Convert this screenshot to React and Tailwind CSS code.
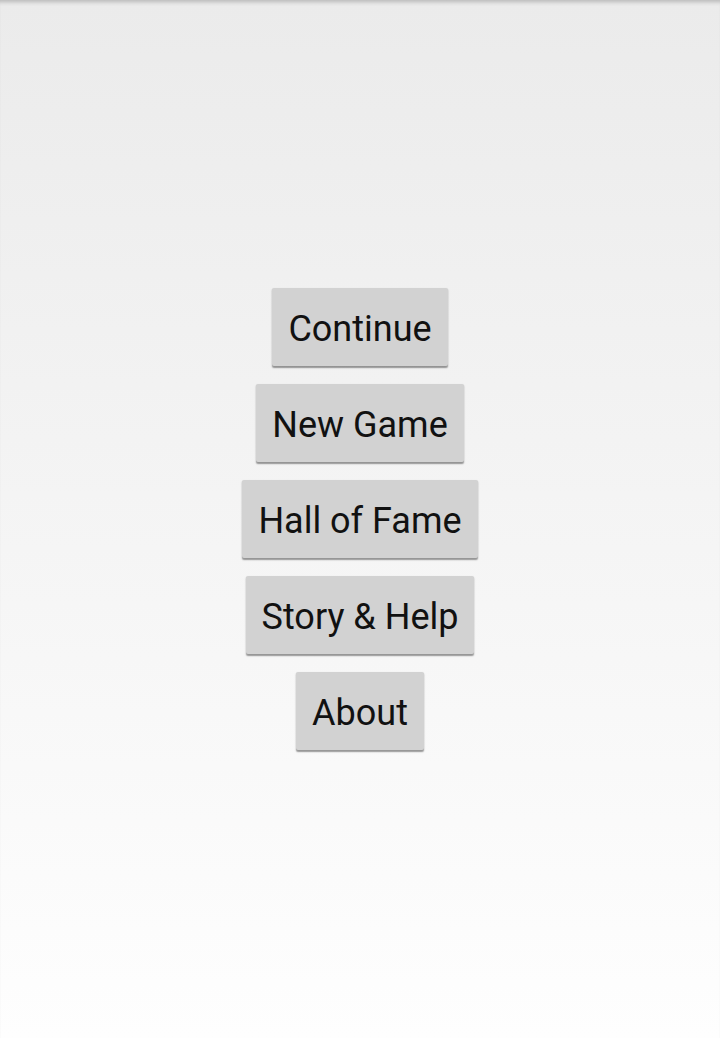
const items = ['Continue', 'New Game', 'Hall of Fame', 'Story & Help', 'About']

const App = () => {
  return (
    <div
      className="h-[1038px] w-full flex flex-col items-center justify-center gap-[18px] bg-gradient-to-b from-[#ebebeb] to-[#fefefe] shadow-[inset_0_5px_4px_-3px_rgba(0,0,0,0.22)]"
      style={{ fontFamily: 'Roboto, "Noto Sans", sans-serif' }}
    >
      {items.map((label) => (
        <button
          key={label}
          className="h-[78px] px-[16px] pt-[4px] bg-[#d2d2d2] rounded-[2px] text-[36px] leading-none text-[#111] shadow-[0_1.5px_1.5px_rgba(0,0,0,0.4)]"
        >
          {label}
        </button>
      ))}
    </div>
  )
}

export default App
